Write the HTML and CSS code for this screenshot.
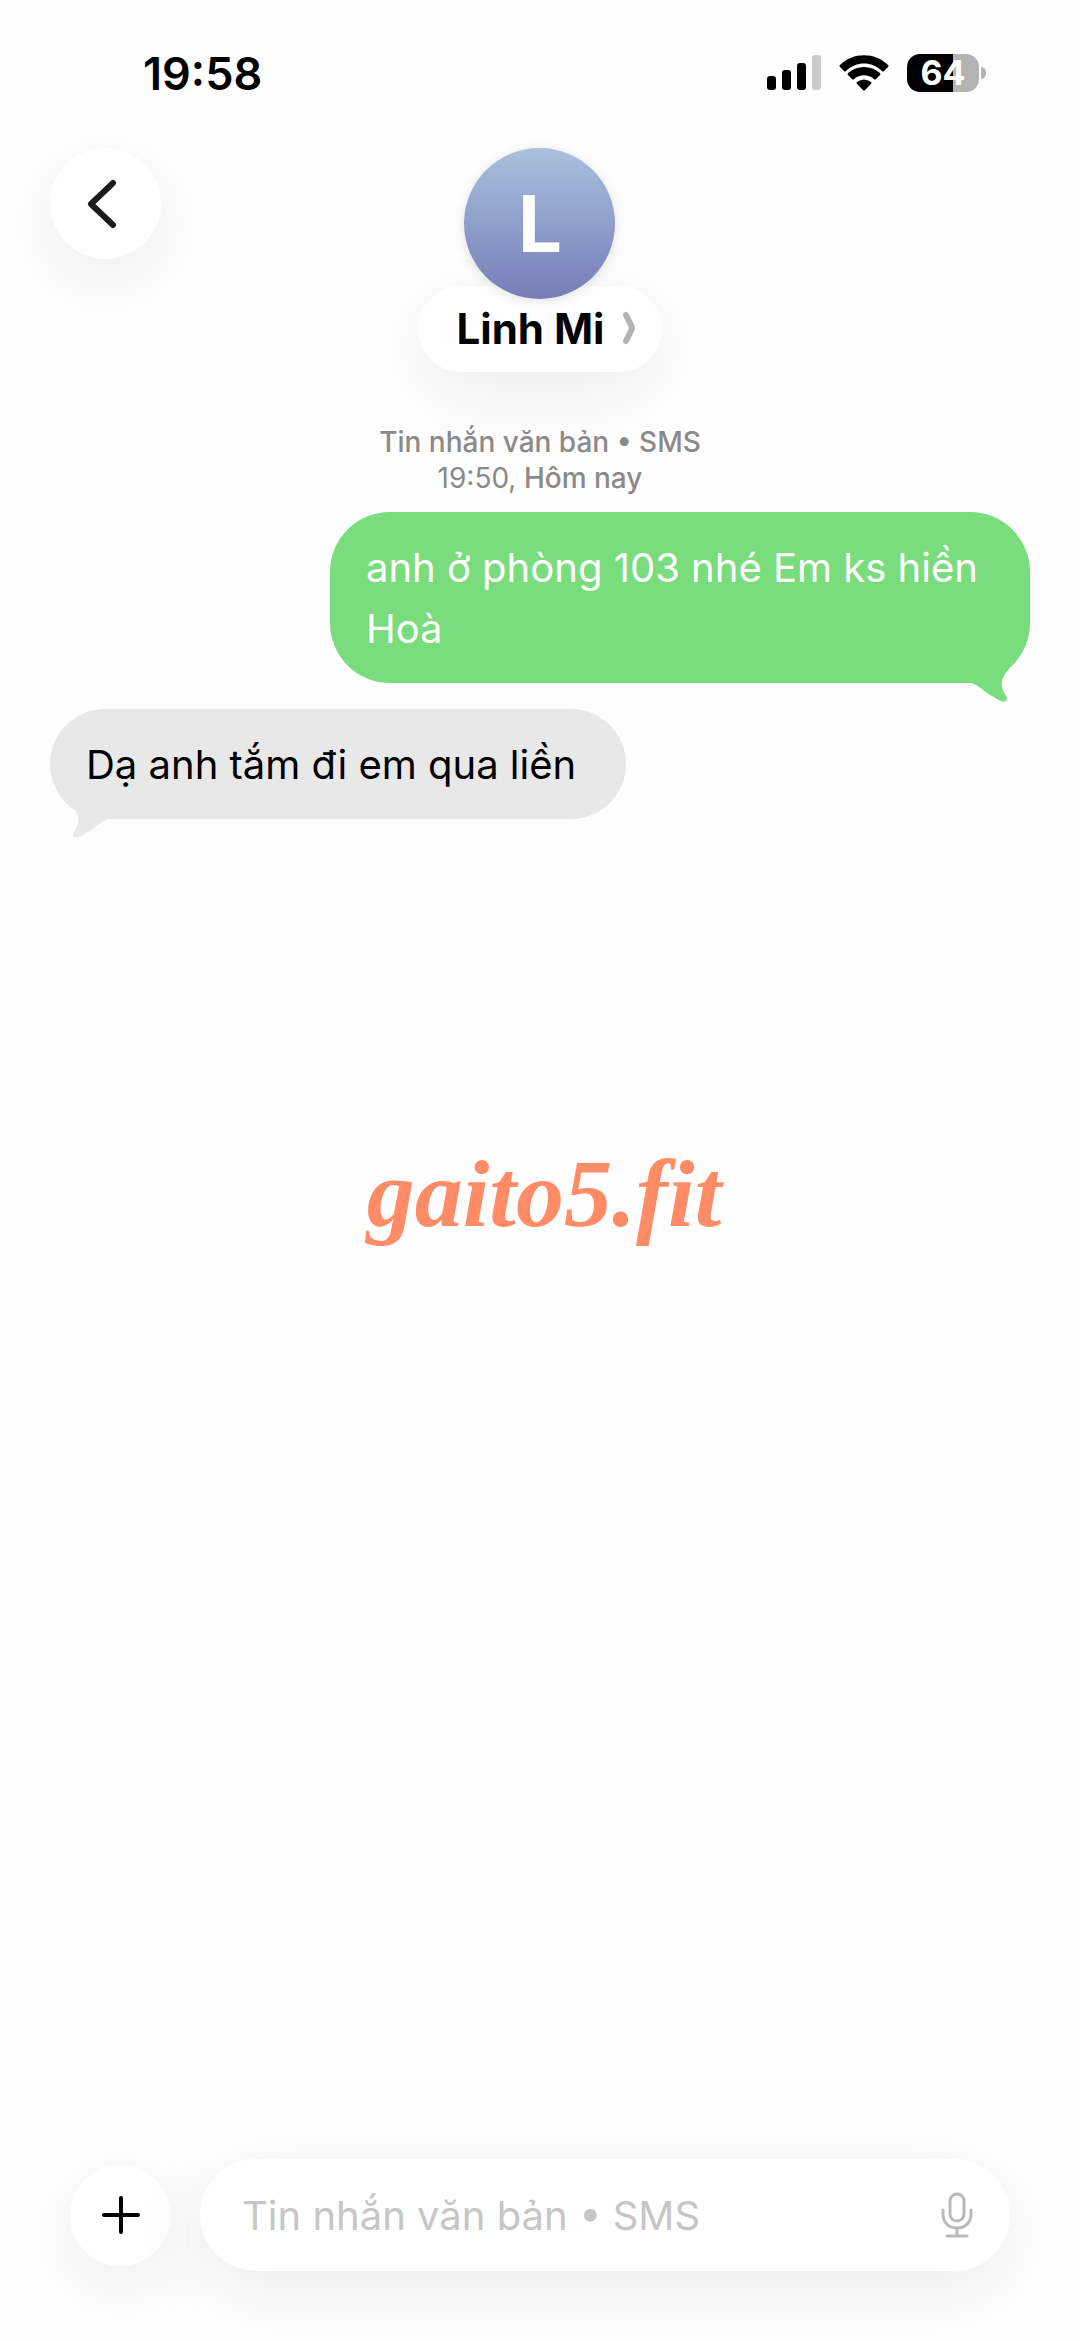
FILE: index.html
```html
<!DOCTYPE html>
<html lang="vi">
<head>
    <meta charset="UTF-8">
    <meta name="viewport" content="width=device-width, initial-scale=1.0">
    <title>Linh Mi</title>
    <link rel="stylesheet" href="styles.css">
</head>
<body>
    <div class="status-bar">
        <span class="time">19:58</span>
        <div class="status-icons">
            <svg class="signal" viewBox="0 0 54 36" aria-hidden="true">
                <rect x="0" y="21" width="9" height="14" rx="3"/>
                <rect x="15" y="15" width="9" height="20" rx="3"/>
                <rect x="30" y="8" width="9" height="27" rx="3"/>
                <rect x="45" y="0" width="9" height="35" rx="3" fill="#ccc"/>
            </svg>
            <svg class="wifi" viewBox="0 0 50 36" aria-hidden="true">
                <path d="M1 10C14-3 36-3 49 10Q50 11 49 12L45 16Q44 17 43 16C33 6 17 6 7 16Q6 17 5 16L1 12Q0 11 1 10Z"/>
                <path d="M9 18C18 10 32 10 41 18Q42 19 41 20L37 24Q36 25 35 24C29 19 21 19 15 24Q14 25 13 24L9 20Q8 19 9 18Z"/>
                <path d="M18 27Q25 22 32 27Q33 28 32 29L26 35Q25 36 24 35L18 29Q17 28 18 27Z"/>
            </svg>
            <div class="battery"><span class="battery-level">64</span></div>
        </div>
    </div>

    <header class="chat-header">
        <button class="round-button back" aria-label="Quay lại">
            <svg width="30" height="50" viewBox="0 0 30 50" aria-hidden="true">
                <path d="M26 4L4 25L26 46" fill="none" stroke="#1c1c1e" stroke-width="6" stroke-linecap="round" stroke-linejoin="round"/>
            </svg>
        </button>
        <div class="contact">
            <div class="avatar">L</div>
            <button class="contact-name">
                Linh Mi
                <svg width="14" height="34" viewBox="0 0 14 34" aria-hidden="true">
                    <path d="M4 4L9 14Q11 17 9 20L4 30" fill="none" stroke="#b4b4b4" stroke-width="6" stroke-linecap="round"/>
                </svg>
            </button>
        </div>
    </header>

    <main class="messages">
        <p class="meta">Tin nhắn văn bản • SMS<br><span class="meta-time">19:50,</span> Hôm nay</p>
        <div class="bubble sent">
            anh ở phòng 103 nhé Em ks hiền Hoà
            <svg class="tail" viewBox="0 0 50 48" aria-hidden="true">
                <path d="M8 28C17 28 20 36 40 46C44 48 48 45 45 41C38 31 40 22 48 14L30 5L8 20Z"/>
            </svg>
        </div>
        <div class="bubble received">
            Dạ anh tắm đi em qua liền
            <svg class="tail" viewBox="0 0 50 48" aria-hidden="true">
                <path d="M42 28C33 28 30 36 10 46C6 48 2 45 5 41C12 31 10 22 2 14L20 5L42 20Z"/>
            </svg>
        </div>
        <p class="watermark">gaito5.fit</p>
    </main>

    <footer class="composer">
        <button class="round-button add" aria-label="Thêm">
            <svg width="40" height="40" viewBox="0 0 40 40" aria-hidden="true">
                <path d="M20 3V37M3 20H37" stroke="#000" stroke-width="4" stroke-linecap="round"/>
            </svg>
        </button>
        <div class="message-box">
            <input type="text" aria-label="Tin nhắn" placeholder="Tin nhắn văn bản • SMS">
            <button class="mic" aria-label="Đọc chính tả">
                <svg width="32" height="46" viewBox="0 0 32 46" fill="none" stroke="#b9babc" stroke-width="3" stroke-linecap="round" aria-hidden="true">
                    <rect x="9" y="2" width="14" height="27" rx="7"/>
                    <path d="M2 18V22C2 31 8 36 16 36S30 31 30 22V18M16 36V44M6 44H26"/>
                </svg>
            </button>
        </div>
    </footer>
</body>
</html>
```

FILE: styles.css
```css
* {
    box-sizing: border-box;
}

body {
    margin: 0;
    min-height: 100vh;
    display: flex;
    flex-direction: column;
    overflow-x: hidden;
    background: #fefefe;
    color: #000;
    font-family: Inter, "Noto Sans", sans-serif;
    font-size: 40px;
}

button {
    border: none;
    padding: 0;
    color: inherit;
    font: inherit;
    cursor: pointer;
}

svg {
    display: block;
}

/* Status bar */
.status-bar {
    display: flex;
    justify-content: space-between;
    align-items: center;
    height: 148px;
    padding: 0 94px 2px 143px;
}

.time {
    font-size: 45px;
    font-weight: 600;
}

.status-icons {
    display: flex;
    align-items: center;
    gap: 18px;
}

.signal {
    width: 54px;
    height: 36px;
}

.wifi {
    width: 50px;
    height: 36px;
}

.battery {
    position: relative;
    width: 72px;
    height: 38px;
    margin-right: 7px;
    border-radius: 13px;
    background: linear-gradient(to right, #000 64%, #b3b3b3 64%);
    color: #fff;
    font-size: 34px;
    font-weight: 700;
    line-height: 38px;
    text-align: center;
}

.battery::after {
    content: "";
    position: absolute;
    right: -7px;
    top: 13px;
    width: 5px;
    height: 12px;
    border-radius: 0 6px 6px 0;
    background: #b3b3b3;
}

/* Header */
.chat-header {
    display: grid;
    grid-template-columns: 1fr auto 1fr;
    align-items: start;
    padding: 0 50px;
}

.round-button {
    display: flex;
    flex: none;
    align-items: center;
    justify-content: center;
    border-radius: 50%;
    background: #fff;
    box-shadow: 0 20px 80px rgba(0, 0, 0, 0.08);
}

.back {
    width: 111px;
    height: 111px;
    padding-right: 8px;
}

.contact {
    display: flex;
    flex-direction: column;
    align-items: center;
}

.avatar {
    z-index: 1;
    width: 151px;
    height: 151px;
    margin-bottom: -13px;
    border-radius: 50%;
    background: linear-gradient(#aac0de, #767db7);
    box-shadow: 0 2px 12px rgba(0, 0, 0, 0.12);
    color: #fff;
    font-size: 78px;
    font-weight: 700;
    line-height: 151px;
    text-align: center;
}

.contact-name {
    display: flex;
    align-items: center;
    gap: 18px;
    height: 86px;
    padding: 0 26px 2px 39px;
    border-radius: 43px;
    background: #fff;
    box-shadow: 0 20px 80px rgba(0, 0, 0, 0.08);
    font-size: 42px;
    font-weight: 700;
}

/* Messages */
.messages {
    display: flex;
    flex: 1;
    flex-direction: column;
    padding: 52px 50px 0;
}

.meta {
    margin: 0 0 16px;
    color: #8a8a8a;
    font-size: 28px;
    font-weight: 500;
    line-height: 36px;
    text-align: center;
}

.meta-time {
    font-weight: 400;
}

.bubble {
    position: relative;
    max-width: 700px;
    margin-bottom: 26px;
    padding: 25px 36px 24px;
    border-radius: 60px;
    line-height: 61px;
}

.sent {
    align-self: flex-end;
    background: #79dc7d;
    color: #fff;
}

.received {
    align-self: flex-start;
    padding-right: 50px;
    background: #e8e8e8;
}

.tail {
    position: absolute;
    bottom: -20px;
    width: 50px;
    height: 48px;
}

.sent .tail {
    right: 19px;
    fill: #79dc7d;
}

.received .tail {
    left: 19px;
    fill: #e8e8e8;
}

.watermark {
    margin: 293px 0 0;
    padding-left: 8px;
    color: #ff8c66;
    font-family: "Liberation Serif", serif;
    font-size: 96px;
    font-style: italic;
    font-weight: 700;
    text-align: center;
}

/* Composer */
.composer {
    display: flex;
    align-items: center;
    gap: 29px;
    padding: 0 70px 70px;
}

.add {
    width: 101px;
    height: 101px;
}

.message-box {
    display: flex;
    flex: 1;
    align-items: center;
    height: 112px;
    padding: 0 37px 0 42px;
    border-radius: 56px;
    background: #fff;
    box-shadow: 0 20px 80px rgba(0, 0, 0, 0.08);
}

.message-box input {
    flex: 1;
    min-width: 0;
    padding: 0;
    border: none;
    outline: none;
    background: none;
    font: inherit;
}

.message-box input::placeholder {
    color: #c6c6c6;
    opacity: 1;
}

.mic {
    background: none;
}
```
